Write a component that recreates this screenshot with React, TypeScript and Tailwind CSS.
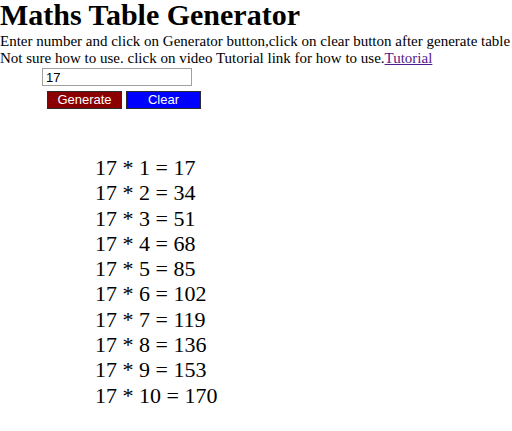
import React from "react";

export default function App() {
  const n = 17;
  const rows = Array.from({ length: 10 }, (_, i) => i + 1);
  return (
    <div className="bg-white text-black min-h-[431px]" style={{ fontFamily: '"Liberation Serif", "Times New Roman", serif' }}>
      <h1 className="m-0 text-[30px] leading-[29px] font-bold">Maths Table Generator</h1>
      <div className="text-[15px] leading-[17px] mt-[4px]">
        <div>Enter number and click on Generator button,click on clear button after generate table</div>
        <div>
          Not sure how to use. click on video Tutorial link for how to use.
          <a href="#" className="text-[#551a8b] underline">Tutorial</a>
        </div>
      </div>
      <div className="pl-[42px] mt-[1px]">
        <input
          type="text"
          defaultValue="17"
          className="block w-[150px] h-[18px] border border-[#a0a0a0] pl-[3px] text-[13px] leading-[16px] outline-none"
          style={{ fontFamily: '"Liberation Sans", Arial, sans-serif' }}
        />
      </div>
      <div className="flex gap-[4px] pl-[47px] mt-[5px]" style={{ fontFamily: '"Liberation Sans", Arial, sans-serif' }}>
        <button className="w-[75px] h-[18px] bg-[#8b0000] text-white text-[13px] leading-[14px] border border-[#2a2a2a] border-solid">Generate</button>
        <button className="w-[75px] h-[18px] bg-[#0000ff] text-white text-[13px] leading-[14px] border border-[#2a2a2a] border-solid">Clear</button>
      </div>
      <div className="pl-[95px] pt-[46px] text-[22px] leading-[25.3px]">
        {rows.map((i) => (
          <div key={i}>{`${n} * ${i} = ${n * i}`}</div>
        ))}
      </div>
    </div>
  );
}
